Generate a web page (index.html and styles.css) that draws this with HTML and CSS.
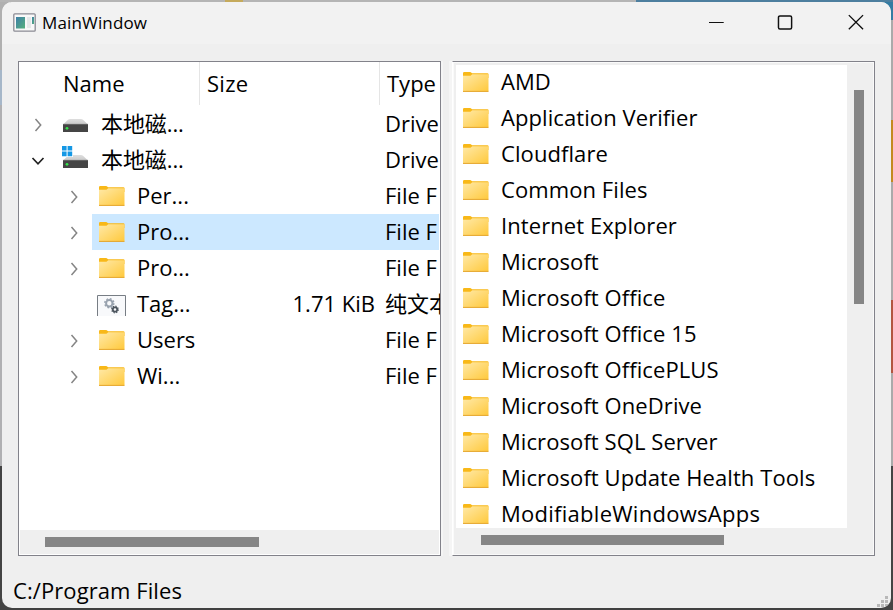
FILE: index.html
```
<!DOCTYPE html>
<html lang="en">
<head>
<meta charset="utf-8">
<title>MainWindow</title>
<link rel="stylesheet" href="styles.css">
</head>
<body>
<svg class="defs" width="0" height="0" aria-hidden="true">
  <defs>
    <linearGradient id="fold" x1="0" y1="0" x2="1" y2="1"><stop offset="0" stop-color="#ffe9a8"/><stop offset="1" stop-color="#ffc93c"/></linearGradient>
    <linearGradient id="metal" x1="0" y1="0" x2="0" y2="1"><stop offset="0" stop-color="#dedede"/><stop offset="1" stop-color="#c9c9c9"/></linearGradient>
    <linearGradient id="appg" x1="0" y1="0" x2="1" y2="1"><stop offset="0" stop-color="#3d7fa8"/><stop offset="1" stop-color="#56b07c"/></linearGradient>
    <symbol id="folder" viewBox="0 0 26 20"><path d="M0 1.2Q0 0 1.2 0H7.3L9.2 1.2H24.5Q25.5 1.2 25.5 2.2V6H0z" fill="#f8b818"/><path d="M0 3.7H7.5L9.2 2.2H25.5V19.3H0z" fill="url(#fold)"/><path d="M0 19.4H25.5" stroke="#e5a426" stroke-width="1"/></symbol>
    <symbol id="drive" viewBox="0 0 27 24"><path d="M1 14.5L6 9.8Q6.8 9 8 9H19Q20.2 9 21 9.8L26 14.5z" fill="url(#metal)"/><path d="M1 14H26V22H1z" fill="#454545"/><path d="M1 14.4H26" stroke="#666"/><circle cx="5" cy="18.3" r="1.4" fill="#35e34c"/></symbol>
    <symbol id="right" viewBox="0 0 10 16"><path d="M2.5 2L7.7 8L2.5 14" fill="none" stroke="#858585" stroke-width="1.5"/></symbol>
  </defs>
</svg>
<div class="window">
  <header class="titlebar">
    <svg class="app" width="23" height="19" viewBox="0 0 23 19"><rect x=".8" y=".8" width="21.4" height="17.4" rx="1" fill="#f8f8f8" stroke="#8b8b94" stroke-width="1.3"/><path d="M3 4H12V15.5H3z" fill="url(#appg)"/><path d="M14 4H18V15H14z" fill="#e5e8e9"/><path d="M19 4H21V11H19z" fill="url(#appg)"/></svg>
    <span class="title">MainWindow</span>
    <svg class="controls" width="160" height="18" viewBox="0 0 160 18" fill="none" stroke="#111" stroke-width="1.5"><path d="M0 9.5H15" stroke-width="1.1"/><rect x="69.8" y="2.8" width="13.4" height="13.4" rx="1.5"/><path d="M141 2L155.500 16.500M155.500 2L141 16.500" stroke-width="1.4"/></svg>
  </header>
  <main class="panes">
    <section class="tree">
      <div class="head"><span class="c1">Name</span><span class="c2">Size</span><span class="c3">Type</span></div>
      <div class="row drive"><svg class="arrow"><use href="#right"/></svg><svg class="drv"><use href="#drive"/></svg><span class="name">本地磁...</span><span class="size"></span><span class="type">Drive</span></div>
      <div class="row drive"><svg class="arrow" viewBox="0 0 14 16"><path d="M1.5 5L7 10.8L12.500 5" fill="none" stroke="#222" stroke-width="1.7"/></svg><svg class="drv" viewBox="0 0 27 24"><use href="#drive" width="27" height="24"/><path d="M-.5 -.5H11V11H-.5z" fill="#fff"/><path d="M0 0H4.6V4.6H0zM5.600 0H10.2V4.6H5.6zM0 5.6H4.6V10.2H0zM5.6 5.6H10.2V10.2H5.6z" fill="#1598e5"/></svg><span class="name">本地磁...</span><span class="size"></span><span class="type">Drive</span></div>
      <div class="row"><svg class="arrow"><use href="#right"/></svg><svg class="folder"><use href="#folder"/></svg><span class="name">Per...</span><span class="size"></span><span class="type">File F</span></div>
      <div class="row selected"><svg class="arrow"><use href="#right"/></svg><svg class="folder"><use href="#folder"/></svg><span class="name">Pro...</span><span class="size"></span><span class="type">File F</span></div>
      <div class="row"><svg class="arrow"><use href="#right"/></svg><svg class="folder"><use href="#folder"/></svg><span class="name">Pro...</span><span class="size"></span><span class="type">File F</span></div>
      <div class="row"><span class="arrow"></span><svg class="gears" viewBox="0 0 29 21"><path d="M.5 21V.5H28.5V21" fill="#f8f9fb" stroke="#777d84"/><circle cx="12.3" cy="8.2" r="3.2" fill="none" stroke="#98a2ae" stroke-width="2"/><circle cx="12.3" cy="8.2" r="4.5" fill="none" stroke="#98a2ae" stroke-width="1.5" stroke-dasharray="1.8 1.73"/><circle cx="18" cy="14.5" r="2.2" fill="none" stroke="#4d565f" stroke-width="1.8"/><circle cx="18" cy="14.5" r="3.3" fill="none" stroke="#4d565f" stroke-width="1.2" stroke-dasharray="1.3 1.29"/></svg><span class="name">Tag...</span><span class="size">1.71 KiB</span><span class="type cjk">纯文本</span></div>
      <div class="row"><svg class="arrow"><use href="#right"/></svg><svg class="folder"><use href="#folder"/></svg><span class="name">Users</span><span class="size"></span><span class="type">File F</span></div>
      <div class="row"><svg class="arrow"><use href="#right"/></svg><svg class="folder"><use href="#folder"/></svg><span class="name">Wi...</span><span class="size"></span><span class="type">File F</span></div>
      <div class="hbar"><div class="thumb"></div></div>
    </section>
    <div class="splitter"></div>
    <section class="list">
      <div class="items">
        <div class="item"><svg class="folder"><use href="#folder"/></svg><span>AMD</span></div>
        <div class="item"><svg class="folder"><use href="#folder"/></svg><span>Application Verifier</span></div>
        <div class="item"><svg class="folder"><use href="#folder"/></svg><span>Cloudflare</span></div>
        <div class="item"><svg class="folder"><use href="#folder"/></svg><span>Common Files</span></div>
        <div class="item"><svg class="folder"><use href="#folder"/></svg><span>Internet Explorer</span></div>
        <div class="item"><svg class="folder"><use href="#folder"/></svg><span>Microsoft</span></div>
        <div class="item"><svg class="folder"><use href="#folder"/></svg><span>Microsoft Office</span></div>
        <div class="item"><svg class="folder"><use href="#folder"/></svg><span>Microsoft Office 15</span></div>
        <div class="item"><svg class="folder"><use href="#folder"/></svg><span>Microsoft OfficePLUS</span></div>
        <div class="item"><svg class="folder"><use href="#folder"/></svg><span>Microsoft OneDrive</span></div>
        <div class="item"><svg class="folder"><use href="#folder"/></svg><span>Microsoft SQL Server</span></div>
        <div class="item"><svg class="folder"><use href="#folder"/></svg><span>Microsoft Update Health Tools</span></div>
        <div class="item"><svg class="folder"><use href="#folder"/></svg><span class="wide">ModifiableWindowsApps</span></div>
      </div>
      <div class="vbar"><div class="thumb"></div></div>
      <div class="hbar"><div class="thumb"></div></div>
    </section>
  </main>
  <footer class="status"><span>C:/Program Files</span><svg class="grip" width="12" height="12" viewBox="0 0 12 12" fill="#b8b8b8"><path d="M8 0h3v3H8zM4 4h3v3H4zM8 4h3v3H8zM0 8h3v3H0zM4 8h3v3H4zM8 8h3v3H8z"/></svg></footer>
</div>
</body>
</html>
```
FILE: styles.css
```
* { box-sizing: border-box; }
body {
  margin: 0;
  width: 893px;
  height: 610px;
  overflow: hidden;
  padding: 2px;
  font: 22px/36px "Open Sans", "Noto Sans CJK SC", sans-serif;
  color: #000;
  background:
    linear-gradient(90deg, #b5b5b5 225px, #c5aa5c 225px 243px, #b5b5b5 243px 636px, #4d7f9f 636px) 0 0 / 893px 2px no-repeat,
    linear-gradient(#347ca3 20px, #aaa 20px 120px, #c38a20 120px 182px, #aaa 182px 300px, #b25640 300px 373px, #aaa 373px 466px, #444 466px) 100% 0 / 10px 610px no-repeat,
    linear-gradient(#b0b0b0 70px, #a6b7c9 70px 105px, #b0b0b2 105px 466px, #444 466px) 0 0 / 10px 610px no-repeat,
    #404040;
}
.defs { position: absolute; }
svg { display: block; flex: none; }
.window {
  display: flex;
  flex-direction: column;
  width: 889px;
  height: 606px;
  border-radius: 10px;
  overflow: hidden;
  background: #efefef;
}
.titlebar {
  display: flex;
  align-items: center;
  height: 42px;
  padding: 0 25px 2px 11px;
  background: #f2f2f2;
}
.title { margin-left: 6px; padding-top: 1px; font-size: 17px; letter-spacing: .15px; }
.controls { margin-left: auto; width: 157px; overflow: visible; }
.controls rect { transform: translateX(1px); }
.controls path:last-child { transform: translateX(1.500px); }
.panes { display: flex; height: 495px; margin: 17px 16px 0; }
.tree {
  display: flex;
  flex-direction: column;
  width: 423px;
  padding: 0 1px 1px 0;
  overflow: hidden;
  border: 1px solid #82828a;
  background: #fff;
}
.head { display: flex; height: 44px; line-height: 42px; flex: none; }
.head span { height: 43px; flex: none; }
.c1 { width: 181px; padding-left: 44px; border-right: 1px solid #e5e5e5; }
.c2 { width: 180px; padding-left: 7px; border-right: 1px solid #e5e5e5; letter-spacing: .3px; }
.c3 { padding-left: 7px; }
.row { display: flex; align-items: center; height: 36px; padding-left: 50px; flex: none; white-space: nowrap; }
.row span { line-height: 34px; padding-bottom: 2px; }
.row.drive { padding-left: 14px; }
.arrow { width: 10px; height: 16px; margin: 2px 20px 0 0; flex: none; }
.drive .arrow { width: 14px; margin-right: 17px; margin-left: -2px; }
.folder { width: 26px; height: 20px; margin-right: 12px; }
.drv { width: 27px; height: 24px; margin: -4px 12px 0 0; overflow: visible; }
.gears { width: 29px; height: 21px; margin: 2px 11px 0 -2px; }
.name { width: 100px; flex: none; }
.drive .name { width: 136px; letter-spacing: -.1px; }
.size { width: 138px; text-align: right; flex: none; }
.type { margin-left: 10px; }
.drive .type { margin-left: 10px; }
.selected { background: linear-gradient(#cce8ff, #cce8ff) 73px 0 no-repeat; }
.hbar { height: 24px; background: #efefef; }
.tree .hbar { margin: auto 0 0 1px; padding: 7px 0 0 25px; }
.thumb { background: #868686; }
.tree .thumb { width: 214px; height: 10px; }
.splitter { width: 11px; background: linear-gradient(90deg, #f5f5f5 2px, #efefef 2px 8px, #f5f5f5 8px); }
.list {
  display: grid;
  grid-template: 463px 26px / 391px 26px;
  width: 423px;
  padding: 3px 1px 0 3px;
  border: 1px solid #82828a;
  border-left-color: #fff;
  background: #efefef;
  box-shadow: inset 0 0 0 1px #fafafa;
}
.items { overflow: hidden; background: #fff; }
.item { display: flex; align-items: center; height: 36px; padding-left: 7px; white-space: nowrap; }
.item span { line-height: 34px; padding-bottom: 2px; letter-spacing: .08px; }
.item .wide { letter-spacing: .27px; }
.item:first-child { margin-top: -1px; }
.vbar { padding: 25px 0 0 7px; }
.vbar .thumb { width: 10px; height: 214px; }
.list .hbar { height: 25px; padding: 7px 0 0 25px; background: none; }
.list .hbar .thumb { width: 243px; height: 10px; }
.status { display: flex; flex: 1; padding-left: 11px; align-items: flex-end; justify-content: space-between; line-height: 34px; letter-spacing: .08px; }
.status span { padding-bottom: 1px; }
.grip { margin: 0 2px 0 0; }
```
